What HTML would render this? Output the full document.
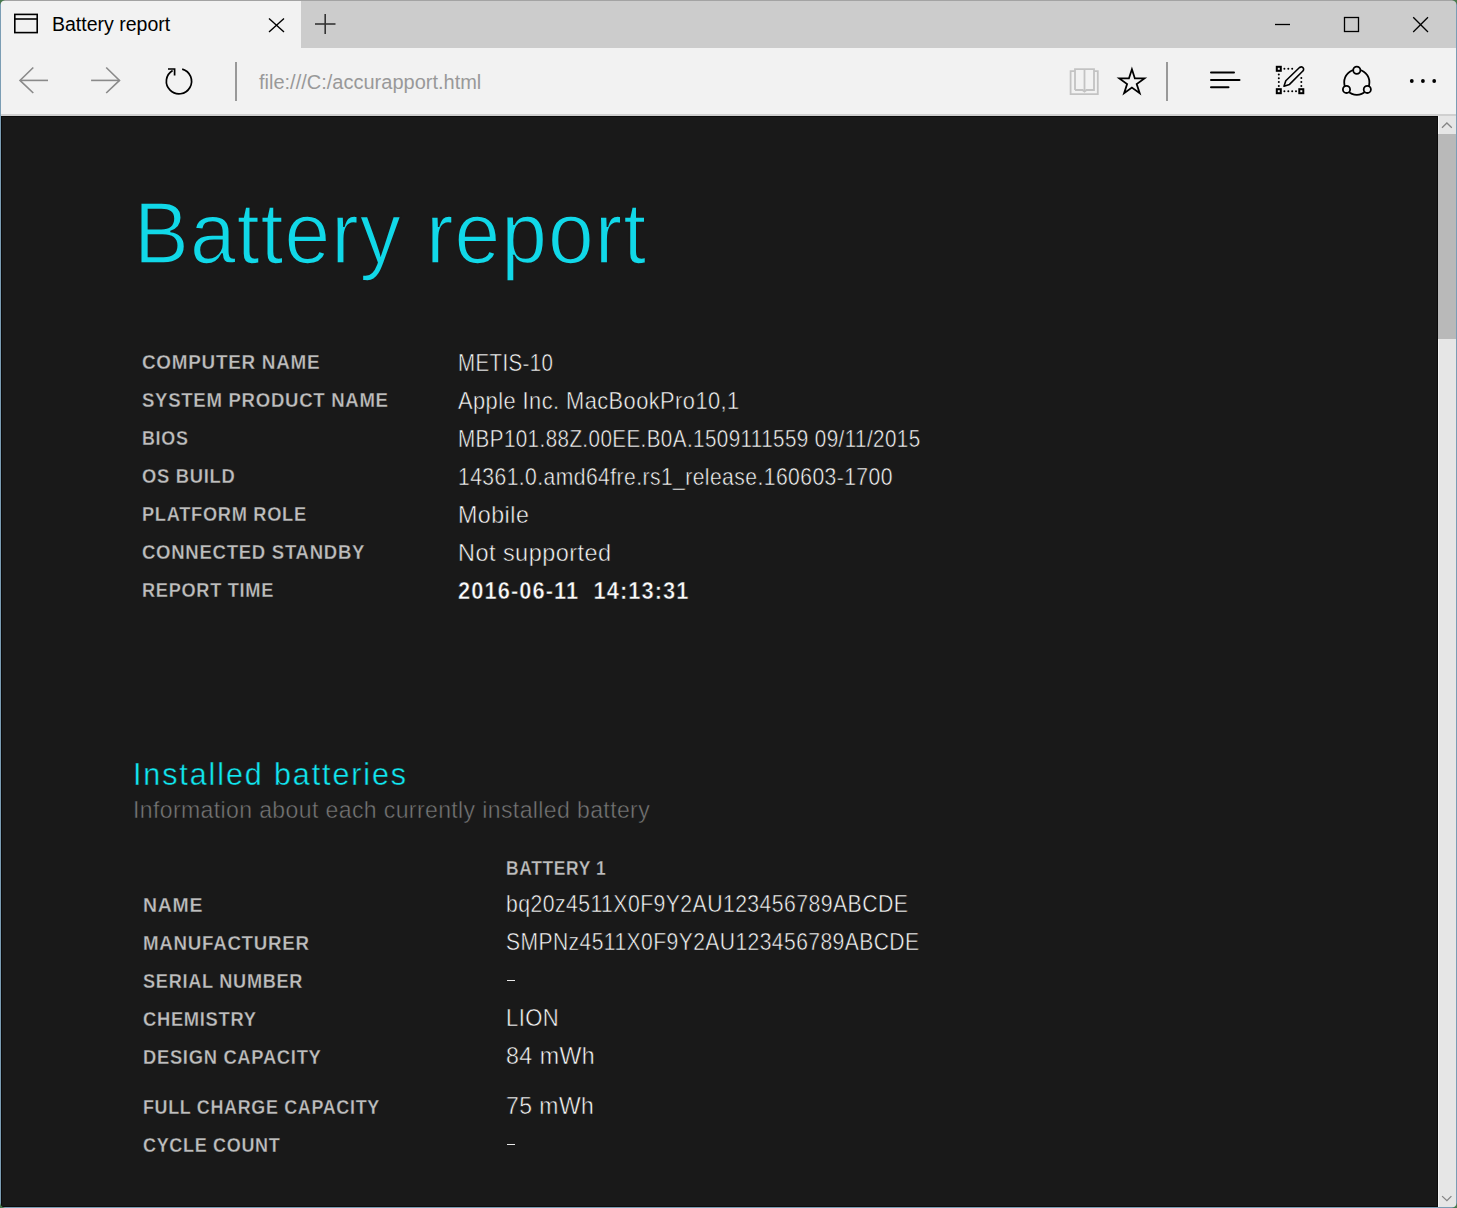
<!DOCTYPE html>
<html><head><meta charset="utf-8">
<style>
html,body{margin:0;padding:0;}
body{width:1457px;height:1208px;overflow:hidden;position:relative;background:#7b9db4;font-family:"Liberation Sans",sans-serif;}
.abs{position:absolute;}
.t{position:absolute;white-space:pre;line-height:1;}
#topb{left:0;top:0;width:1457px;height:1px;background:#a3a3a3;}
#tabbar{left:1px;top:1px;width:1455px;height:47px;background:#cccccc;}
#tab{left:1px;top:1px;width:300px;height:47px;background:#f2f2f2;}
#toolbar{left:1px;top:48px;width:1455px;height:66px;background:#f2f2f2;}
#tbline{left:1px;top:114px;width:1455px;height:2px;background:#d0d0d0;}
#content{left:1px;top:116px;width:1437px;height:1091px;background:#191919;box-shadow:inset 1px 1px 0 #0b0b0b, inset -1px -1px 0 #0b0b0b;}
#sb{left:1438px;top:116px;width:18px;height:1091px;background:#e6e6e6;border-left:1px solid #f4f4f4;box-sizing:border-box;}
#thumb{left:1438px;top:134px;width:18px;height:205px;background:#b9b9b9;}
.lab{font-weight:bold;color:#bebebe;-webkit-text-stroke:0.3px #191919;}
.ex{-webkit-text-stroke:0.5px #191919;}
.h1{-webkit-text-stroke:1.6px #191919;}
.h2{-webkit-text-stroke:0.4px #191919;}
.val{color:#fafafa;-webkit-text-stroke:0.55px #191919;}
.val.vb{-webkit-text-stroke:0.5px #191919;}
</style></head><body>
<div class="abs" id="topb"></div>
<div class="abs" id="tabbar"></div>
<div class="abs" id="tab"></div>
<div class="abs" id="toolbar"></div>
<div class="abs" id="tbline"></div>
<div class="abs" id="content"></div>
<div class="abs" id="sb"></div>
<div class="abs" id="thumb"></div>

<!-- tab contents -->
<svg class="abs" style="left:0;top:0" width="1457" height="116" viewBox="0 0 1457 116">
  <!-- tab icon -->
  <g fill="none" stroke="#000" stroke-width="1.6">
    <rect x="14.8" y="14.4" width="22.4" height="18.2"/>
    <line x1="14.8" y1="19" x2="37.2" y2="19"/>
  </g>
  <!-- tab close -->
  <g stroke="#000" stroke-width="1.4">
    <line x1="269" y1="18.5" x2="284" y2="32"/>
    <line x1="284" y1="18.5" x2="269" y2="32"/>
  </g>
  <!-- plus -->
  <g stroke="#333" stroke-width="1.6">
    <line x1="315" y1="24" x2="335.5" y2="24"/>
    <line x1="325.2" y1="14" x2="325.2" y2="34"/>
  </g>
  <!-- window controls -->
  <g stroke="#000" stroke-width="1.3" fill="none">
    <line x1="1275" y1="24.5" x2="1290" y2="24.5"/>
    <rect x="1344.5" y="17.5" width="14" height="14"/>
    <line x1="1413.2" y1="17.2" x2="1428" y2="32"/>
    <line x1="1428" y1="17.2" x2="1413.2" y2="32"/>
  </g>
  <!-- back / forward -->
  <g stroke="#8a8a8a" stroke-width="1.6" fill="none">
    <polyline points="33.3,67.5 20,80.4 33.3,93"/>
    <line x1="20" y1="80.4" x2="48" y2="80.4"/>
    <polyline points="106.2,67.5 119.5,80.4 106.2,93"/>
    <line x1="91.1" y1="80.4" x2="119.5" y2="80.4"/>
  </g>
  <!-- refresh -->
  <g stroke="#000" stroke-width="1.7" fill="none">
    <path d="M182.2,69.1 A12.6,12.6 0 1 1 172.6,70.4"/>
    <polyline points="168,69 174.6,69 174.6,75.4"/>
  </g>
  <!-- separators -->
  <rect x="235" y="62" width="2" height="39" fill="#999"/>
  <rect x="1166" y="62" width="2" height="39" fill="#999"/>
  <!-- reading view book -->
  <g stroke="#c3c3c3" stroke-width="1.8" fill="none" stroke-linejoin="miter">
    <polyline points="1075,71.1 1070.6,71.1 1070.6,94.1 1097.8,94.1 1097.8,71.1 1094,71.1"/>
    <path d="M1075,90 V69.1 H1084.5 V91.8 M1084.5,69.1 H1094 V90 H1086.5 L1084.5,91.6 L1082.5,90 H1075"/>
  </g>
  <!-- star -->
  <path d="M1131.90,69.30 L1134.86,78.42 L1144.45,78.42 L1136.70,84.06 L1139.66,93.18 L1131.90,87.54 L1124.14,93.18 L1127.10,84.06 L1119.35,78.42 L1128.94,78.42 Z" fill="none" stroke="#000" stroke-width="1.8" stroke-linejoin="miter"/>
  <!-- hub -->
  <g stroke="#000" stroke-width="2" stroke-linecap="round">
    <line x1="1211" y1="72.5" x2="1234" y2="72.5"/>
    <line x1="1211" y1="79.9" x2="1239.5" y2="79.9"/>
    <line x1="1211" y1="87.3" x2="1228.5" y2="87.3"/>
  </g>
  <!-- web note -->
  <g fill="none" stroke="#000" stroke-width="2">
    <rect x="1276.8" y="66.8" width="4" height="4"/>
    <rect x="1276.8" y="89.2" width="4" height="4"/>
    <rect x="1299.3" y="89.2" width="4" height="4"/>
  </g>
  <g fill="#000">
    <circle cx="1284.4" cy="68.8" r="1"/><circle cx="1288.3" cy="68.8" r="1"/><circle cx="1292.2" cy="68.8" r="1"/>
    <circle cx="1278.8" cy="74.6" r="1"/><circle cx="1278.8" cy="78.3" r="1"/><circle cx="1278.8" cy="82" r="1"/><circle cx="1278.8" cy="86" r="1"/>
    <circle cx="1284.4" cy="91.2" r="1"/><circle cx="1288.3" cy="91.2" r="1"/><circle cx="1292.2" cy="91.2" r="1"/><circle cx="1296" cy="91.2" r="1"/>
    <circle cx="1301.3" cy="78" r="1"/><circle cx="1301.3" cy="82" r="1"/><circle cx="1301.3" cy="86" r="1"/>
  </g>
  <path d="M1299.5,67.5 Q1302.5,65.8 1303.6,68.8 Q1304,70 1302.6,71.3 L1289.5,84.4 L1284,86.2 L1285.8,80.8 Z" fill="none" stroke="#000" stroke-width="1.6" stroke-linejoin="round"/>
  <!-- share -->
  <g fill="none" stroke="#000" stroke-width="1.8">
    <circle cx="1356.8" cy="82.2" r="12.6"/>
  </g>
  <g fill="#f2f2f2" stroke="#000" stroke-width="1.8">
    <circle cx="1356.8" cy="70.2" r="3.6"/>
    <circle cx="1346.5" cy="89.4" r="3.6"/>
    <circle cx="1367.3" cy="89.4" r="3.6"/>
  </g>
  <!-- more -->
  <g fill="#000">
    <circle cx="1411.8" cy="81" r="1.9"/>
    <circle cx="1422.9" cy="81" r="1.9"/>
    <circle cx="1434.2" cy="81" r="1.9"/>
  </g>
</svg>

<div class="t" style="left:52px;top:14.6px;font-size:19.5px;color:#000;">Battery report</div>
<div class="t" style="left:259px;top:71.8px;font-size:20px;color:#999;">file:///C:/accurapport.html</div>

<!-- scrollbar arrows -->
<svg class="abs" style="left:1438px;top:116px" width="18" height="1091" viewBox="0 0 18 1091">
  <polyline points="4,11.7 8.9,7 13.8,11.7" fill="none" stroke="#858585" stroke-width="1.3"/>
  <polyline points="4.1,1080.1 8.9,1084.7 13.4,1080.1" fill="none" stroke="#858585" stroke-width="1.3"/>
</svg>

<!-- content -->
<div class="t h1" style="left:134px;top:189px;font-size:88px;letter-spacing:1.2px;transform:scaleX(0.9332);transform-origin:0 0;color:#11d8e8;">Battery report</div>
<div class="t lab" style="left:142px;top:351px;font-size:21px;letter-spacing:0.8px;transform:scaleX(0.8998);transform-origin:0 0;">COMPUTER NAME</div>
<div class="t lab" style="left:142px;top:389px;font-size:21px;letter-spacing:0.8px;transform:scaleX(0.8847);transform-origin:0 0;">SYSTEM PRODUCT NAME</div>
<div class="t lab" style="left:142px;top:427px;font-size:21px;letter-spacing:0.8px;transform:scaleX(0.8531);transform-origin:0 0;">BIOS</div>
<div class="t lab" style="left:142px;top:465px;font-size:21px;letter-spacing:0.8px;transform:scaleX(0.8750);transform-origin:0 0;">OS BUILD</div>
<div class="t lab" style="left:142px;top:503px;font-size:21px;letter-spacing:0.8px;transform:scaleX(0.8689);transform-origin:0 0;">PLATFORM ROLE</div>
<div class="t lab" style="left:142px;top:541px;font-size:21px;letter-spacing:0.8px;transform:scaleX(0.8840);transform-origin:0 0;">CONNECTED STANDBY</div>
<div class="t lab" style="left:142px;top:579px;font-size:21px;letter-spacing:0.8px;transform:scaleX(0.8667);transform-origin:0 0;">REPORT TIME</div>
<div class="t val" style="left:458px;top:350.7px;font-size:24.5px;letter-spacing:0.5px;transform:scaleX(0.8347);transform-origin:0 0;">METIS-10</div>
<div class="t val" style="left:458px;top:388.7px;font-size:24.5px;letter-spacing:0.5px;transform:scaleX(0.8908);transform-origin:0 0;">Apple Inc. MacBookPro10,1</div>
<div class="t val" style="left:458px;top:426.7px;font-size:24.5px;letter-spacing:0.5px;transform:scaleX(0.8404);transform-origin:0 0;">MBP101.88Z.00EE.B0A.1509111559 09/11/2015</div>
<div class="t val" style="left:458px;top:464.7px;font-size:24.5px;letter-spacing:0.5px;transform:scaleX(0.8612);transform-origin:0 0;">14361.0.amd64fre.rs1_release.160603-1700</div>
<div class="t val" style="left:458px;top:502.7px;font-size:24.5px;letter-spacing:0.5px;transform:scaleX(0.9483);transform-origin:0 0;">Mobile</div>
<div class="t val" style="left:458px;top:540.7px;font-size:24.5px;letter-spacing:0.5px;transform:scaleX(0.9570);transform-origin:0 0;">Not supported</div>
<div class="t val vb" style="left:458px;top:578.7px;font-size:24.5px;letter-spacing:1.2px;transform:scaleX(0.8918);transform-origin:0 0;font-weight:bold;">2016-06-11  14:13:31</div>
<div class="t h2" style="left:133px;top:759px;font-size:30.5px;letter-spacing:1.89px;color:#11e6f0;">Installed batteries</div>
<div class="t ex" style="left:133px;top:798px;font-size:24.5px;letter-spacing:0.4px;transform:scaleX(0.9405);transform-origin:0 0;color:#777;">Information about each currently installed battery</div>
<div class="t lab" style="left:506px;top:857px;font-size:21px;letter-spacing:0.8px;transform:scaleX(0.8291);transform-origin:0 0;">BATTERY 1</div>
<div class="t lab" style="left:143px;top:894px;font-size:21px;letter-spacing:0.8px;transform:scaleX(0.9259);transform-origin:0 0;">NAME</div>
<div class="t lab" style="left:143px;top:932px;font-size:21px;letter-spacing:0.8px;transform:scaleX(0.8918);transform-origin:0 0;">MANUFACTURER</div>
<div class="t lab" style="left:143px;top:970px;font-size:21px;letter-spacing:0.8px;transform:scaleX(0.8657);transform-origin:0 0;">SERIAL NUMBER</div>
<div class="t lab" style="left:143px;top:1008px;font-size:21px;letter-spacing:0.8px;transform:scaleX(0.8733);transform-origin:0 0;">CHEMISTRY</div>
<div class="t lab" style="left:143px;top:1046px;font-size:21px;letter-spacing:0.8px;transform:scaleX(0.8744);transform-origin:0 0;">DESIGN CAPACITY</div>
<div class="t lab" style="left:143px;top:1096px;font-size:21px;letter-spacing:0.8px;transform:scaleX(0.8530);transform-origin:0 0;">FULL CHARGE CAPACITY</div>
<div class="t lab" style="left:143px;top:1134px;font-size:21px;letter-spacing:0.8px;transform:scaleX(0.8562);transform-origin:0 0;">CYCLE COUNT</div>
<div class="t val" style="left:506px;top:891.5px;font-size:24.5px;letter-spacing:0.5px;transform:scaleX(0.8659);transform-origin:0 0;">bq20z4511X0F9Y2AU123456789ABCDE</div>
<div class="t val" style="left:506px;top:929.7px;font-size:24.5px;letter-spacing:0.5px;transform:scaleX(0.8599);transform-origin:0 0;">SMPNz4511X0F9Y2AU123456789ABCDE</div>
<div class="abs" style="left:507px;top:980px;width:8px;height:1px;background:#e8e8e8;"></div>
<div class="t val" style="left:506px;top:1005.8px;font-size:24.5px;letter-spacing:0.5px;transform:scaleX(0.8991);transform-origin:0 0;">LION</div>
<div class="t val" style="left:506px;top:1043.6px;font-size:24.5px;letter-spacing:0.5px;transform:scaleX(0.9459);transform-origin:0 0;">84 mWh</div>
<div class="t val" style="left:506px;top:1093.8px;font-size:24.5px;letter-spacing:0.5px;transform:scaleX(0.9366);transform-origin:0 0;">75 mWh</div>
<div class="abs" style="left:507px;top:1144px;width:8px;height:1px;background:#e8e8e8;"></div>

<!-- corners (desktop green) -->
<svg class="abs" style="left:0;top:0" width="6" height="6"><path d="M0,0 H5 Q1,1 0,5 Z" fill="#4a7a4f"/></svg>
<svg class="abs" style="left:1451px;top:0" width="6" height="6"><path d="M6,0 H1 Q5,1 6,5 Z" fill="#4a7a4f"/></svg>
<svg class="abs" style="left:0;top:1202px" width="6" height="6"><path d="M0,6 H5 Q1,5 0,1 Z" fill="#4a7a4f"/></svg>
<svg class="abs" style="left:1451px;top:1202px" width="6" height="6"><path d="M6,6 H1 Q5,5 6,1 Z" fill="#4a7a4f"/></svg>
</body></html>
